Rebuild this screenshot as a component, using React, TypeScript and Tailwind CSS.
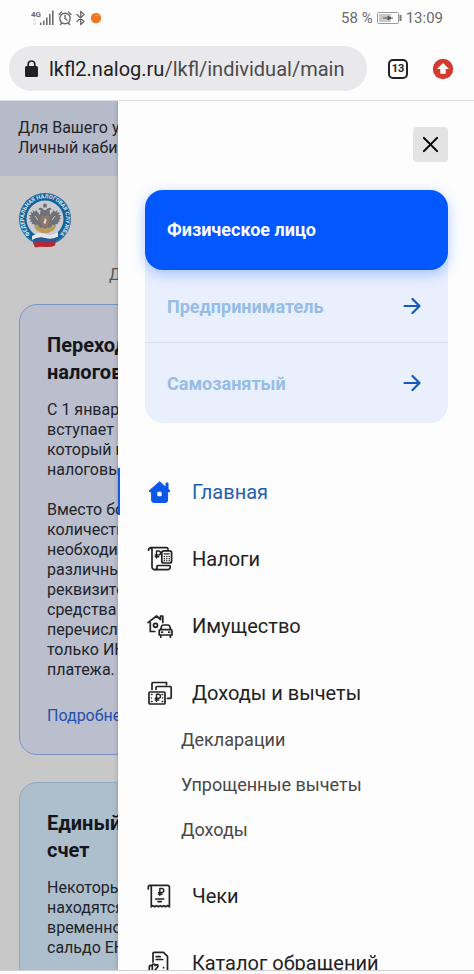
import type { ReactNode } from "react";

const strokeProps = {
  fill: "none",
  stroke: "currentColor",
  strokeLinecap: "round" as const,
  strokeLinejoin: "round" as const,
};

function Icon({ children }: { children: ReactNode }) {
  return (
    <svg viewBox="0 0 26 26" className="size-[26px] shrink-0" aria-hidden="true" {...strokeProps} strokeWidth={1.7}>
      {children}
    </svg>
  );
}

const Ruble = ({ x, y }: { x: number; y: number }) => (
  <g transform={`translate(${x} ${y})`}>
    <path d="M1.5 7V0h2a2 2 0 0 1 0 4H.2M.2 5.700h3.600" strokeWidth={1.4} />
  </g>
);

function HomeIcon() {
  return (
    <Icon>
      <path
        d="M12.400 3 2 12l1 1 1.600-1v9a2.500 2.500 0 0 0 2.500 2.500h11a2.500 2.500 0 0 0 2.500-2.500v-9l1.400 1 1-1-2-2V4h-2v4z"
        fill="currentColor"
        strokeWidth={1}
      />
      <rect x="10.300" y="12.800" width="4.400" height="4.400" rx="1.200" fill="#fff" stroke="none" />
    </Icon>
  );
}

function TaxIcon() {
  return (
    <Icon>
      <path d="M1.500 4.200V3.500A1.800 1.800 0 0 1 5 3.500V21a2.800 2.800 0 0 0 3 2.700M3.200 1.700h16.300a1.500 1.500 0 0 1 1.500 1.500" />
      <path d="M8 23.700a2 2 0 0 0 2-2c0-1.500-.5-2.200 1-2.200h11.500c1.200 0 1.200 4.200-2 4.200z" />
      <Ruble x={8} y={5} />
      <rect x="14.800" y="4.800" width="9.800" height="12.200" rx="2" />
      <path d="M17.200 7.800h5" strokeWidth={1.3} />
      <path d="M17.300 10.500h.1m2.300 0h.1m2.300 0h.1m-4.900 2.200h.1m2.300 0h.1m2.300 0h.1m-4.900 2.100h.1m2.300 0h.1m2.300 0h.1" strokeWidth={1.4} />
    </Icon>
  );
}

function PropertyIcon() {
  return (
    <Icon>
      <path d="M1 9.600 9.500 3l4 3.500V3h2.300v6.500M3.300 9.500v9h4.500" />
      <circle cx="8.500" cy="12.300" r="2" />
      <path d="m13.500 16.700 1.200-3.700q.4-1 1.500-1h5q1 0 1.400 1l1.200 3.700M13.500 16.700h10.300q1.200 0 1.200 1.300v4H12.200v-4q0-1.300 1.300-1.300zM13.800 22v2.200m9.600-2.200v2.200M14.700 19.200h.8m6.200 0h.8" />
    </Icon>
  );
}

function IncomeIcon() {
  return (
    <Icon>
      <path d="M5 9.500V3.500a1 1 0 0 1 1-1h13.500v2.300" />
      <path d="M9 9.300V7.500a1 1 0 0 1 1-1h13.200a1 1 0 0 1 1 1v9.800a1 1 0 0 1-1 1h-2.700" />
      <rect x="2" y="12" width="16" height="12" rx="1" />
      <path d="M4.500 14.500h.6m10 0h.6m-11.200 7h.6m10 0h.6M4.500 18h.1m11 0h.1" strokeWidth={1.4} />
      <Ruble x={8} y={14.3} />
    </Icon>
  );
}

function ReceiptIcon() {
  return (
    <Icon>
      <path d="M1.300 6V3.800a1.500 1.500 0 0 1 3 0v20l1.700-1.200 1.800 1.200 1.800-1.200 1.800 1.200 1.800-1.200 1.800 1.200 1.800-1.200 1.800 1.200 1.800-1.200 2 1.200V4a1.700 1.700 0 0 0-1.700-1.700H2.800" />
      <Ruble x={11.3} y={5.5} />
      <path d="M8.700 16h8M11 18.600h3.300" />
    </Icon>
  );
}

function CatalogIcon() {
  return (
    <Icon>
      <path d="M6 12V3.600Q6 2.300 7.300 2.300h9.200l4 4v15.500q0 1.500-1.500 1.500h-8M9.200 6.700h4M9.200 9.500h6.500M16.500 17.700h.1" />
      <path d="M2.300 25v-8.200q0-1.500 1.500-1.500t1.500 1.500v-1.500q.2-1.500 1.600-1.300 1.300.2 1.200 1.600 2.500-1.800 3 0 .3.900-1.600 2.600L6.300 22.500M5.300 17v2.500" />
    </Icon>
  );
}

function Emblem() {
  return (
    <svg viewBox="0 0 54 56" className="h-14 w-[54px]" role="img" aria-label="Федеральная налоговая служба">
      <circle cx="27" cy="27" r="26" fill="#12619b" />
      <circle cx="27" cy="27" r="18.500" fill="#c9cbce" />
      <circle cx="27" cy="27" r="25" fill="none" stroke="#4c8bb9" strokeWidth=".7" />
      <path id="emblem-ring" d="M12 42A21 21 0 1 1 42 42" fill="none" />
      <text fontSize="5.500" fontWeight="700" fill="#dde6ec" fontFamily="Roboto, sans-serif">
        <textPath href="#emblem-ring" startOffset="50%" textAnchor="middle">
          ФЕДЕРАЛЬНАЯ НАЛОГОВАЯ СЛУЖБА
        </textPath>
      </text>
      <g fill="#6f7078">
        <path d="M26 18c-2-3-5-3-6-.5l2.500.5-.5 5-4-5-1 2-2.500-2 .5 3-3-1 1.500 3-3 0 2.500 2.500-2.500 1 3 1.500-2 1.500 3 .8-1 2 3-.3 0 2 3-1.500 1 3.500 6.500 1 6.500-1 1-3.500 3 1.500 0-2 3 .3-1-2 3-.8-2-1.500 3-1.500-2.500-1 2.500-2.500-3 0 1.500-3-3 1 .5-3-2.500 2-1-2-4 5-.5-5 2.500-.5c-1-2.500-4-2.500-6 .5z" />
        <path d="m27 11-2 2 .5 2.500h3L29 13z" />
      </g>
      <path d="M22.500 24h9v7q-1 3-4.500 4-3.500-1-4.500-4z" fill="#8f7768" />
      <path d="m27 26 1.500 2-1 4-2-1z" fill="#ddd" />
      <path d="m16 34 4-1 2 3 3-1 2 3 2-3 3 1 2-3 4 1-2 4-6 3h-6l-6-3z" fill="#b99a5c" />
      <path d="m19 17 2 0m12 0 2 0M17 24l3 4m17-4-3 4" stroke="#d0ccc2" />
      <path d="M14 44q7-5 13-2t13-2v5q-7 3-13 1t-13 2z" fill="#e6e7ea" />
      <path d="M15 47.500q6-3 12-1t12-1.500v3.500q-6 3-12 1.500t-12 1z" fill="#285994" />
      <path d="M15 51q6-2 12-1t11-1.500l-1 5q-4 2-10 1.500t-10 .5z" fill="#b72731" />
    </svg>
  );
}

function StatusBar() {
  return (
    <div className="flex h-9 items-center justify-between pr-[31px] pl-[31px] text-[15px] text-[#6b6b6b]">
      <div className="flex items-center gap-1">
        <svg viewBox="0 0 23 16" className="h-4 w-[23px]" fill="currentColor" aria-hidden="true">
          <text x="0" y="6.500" fontSize="8" fontWeight="700" fontFamily="Roboto, sans-serif">4G</text>
          <path d="M9 12.500h1.400V15H9zm3-2h1.500V15H12zm3-3h1.600V15H15zm3-3.500h1.600v11H18zm3-3.500h1.600V15H21z" />
          <path d="m2 11 1.500-1.500L5 11M2 13l1.500 1.500L5 13" fill="none" stroke="#bbb" strokeWidth=".7" />
        </svg>
        <svg viewBox="0 0 14 16" className="h-4 w-3.5" aria-hidden="true" {...strokeProps} strokeWidth={1.4}>
          <circle cx="7" cy="8.500" r="5.200" />
          <path d="M7 5.500v3l2 1.500M1 4.500 3.500 2M13 4.500 10.500 2M3.500 13l-1 1.500M10.500 13l1 1.500" />
        </svg>
        <svg viewBox="0 0 10 16" className="h-4 w-2.5" aria-hidden="true" {...strokeProps} strokeWidth={1.3}>
          <path d="m1 4.500 7 7-3.300 3V1.500L8 4.500l-7 7" />
        </svg>
        <svg viewBox="0 0 12 12" className="size-3" aria-hidden="true">
          <circle cx="6" cy="6" r="5.200" fill="#ef7622" />
          <path d="M4 1.500 7 4l3-2" stroke="#f7a54c" fill="none" />
        </svg>
      </div>
      <div className="flex items-center gap-1">
        <span>58 %</span>
        <svg viewBox="0 0 25 12" className="h-3 w-[25px]" aria-hidden="true">
          <rect x=".5" y=".5" width="21" height="11" rx="1" fill="#fff" stroke="#999" />
          <path d="M2 2h12v8H2z" fill="#c9c9c9" />
          <path d="M6 6h10M11 4l3 2-3 2z" stroke="#555" fill="#555" />
          <path d="M23.500 3v6" stroke="#777" strokeWidth="2" />
        </svg>
        <span>13:09</span>
      </div>
    </div>
  );
}

function AddressBar() {
  return (
    <div className="flex items-center border-b border-[#dfdfe1] pt-2.5 pr-5 pb-[9px] pl-[9px]">
      <button type="button" className="flex h-[45px] min-w-0 flex-1 items-center gap-[11px] rounded-full bg-[#e9e9ec] pl-4 text-left text-[20px] text-[#222]">
        <svg viewBox="0 0 13 17" className="h-[17px] w-[13px] shrink-0" aria-hidden="true">
          <rect y="6" width="13" height="11" rx="1.500" fill="#222" />
          <path d="M3.200 7V4.300a3.300 3.300 0 0 1 6.600 0V7" fill="none" stroke="#222" strokeWidth="1.700" />
        </svg>
        <span className="whitespace-nowrap">
          lkfl2.nalog.ru<span className="text-[#4b4b4d]">/lkfl/individual/main</span>
        </span>
      </button>
      <button type="button" aria-label="Вкладки" className="ml-[21px] flex size-5 items-center justify-center rounded-[5px] border-2 border-[#222] text-[11px] leading-4 font-bold text-[#222]">
        <span>13</span>
      </button>
      <button type="button" aria-label="Обновить браузер" className="ml-6">
        <svg viewBox="0 0 22 22" className="size-[22px]" aria-hidden="true">
          <circle cx="11" cy="11" r="10.200" fill="#d33a30" />
          <path d="m11 5 6 6h-3.300v4.700H8.300V11H5z" fill="#fff" />
        </svg>
      </button>
    </div>
  );
}

type Card = { title: string[]; paragraphs: string[][]; link?: string; tone: string };

const cards: Card[] = [
  {
    title: ["Переход", "налогов"],
    paragraphs: [
      ["С 1 январ", "вступает в", "который в", "налоговы"],
      ["Вместо бо", "количеств", "необходим", "различны", "реквизито", "средства", "перечисля", "только ИН", "платежа."],
    ],
    link: "Подробнее",
    tone: "border-[#7795c5] bg-[#bbbecc]",
  },
  {
    title: ["Единый", "счет"],
    paragraphs: [["Некоторы", "находятся", "временно", "сальдо ЕН"]],
    tone: "border-[#8da8c0] bg-[#adbfcc] pb-10",
  },
];

const Lines = ({ lines }: { lines: string[] }) => (
  <>
    {lines.map((line) => (
      <span key={line} className="block">{line}</span>
    ))}
  </>
);

function Page() {
  return (
    <div className="h-full overflow-hidden bg-[#c8c8c9] text-[16px] leading-5 whitespace-nowrap text-[#22242b]">
      <p className="h-[75px] bg-[#b6bbca] pt-[17px] pl-[18px]">
        <Lines lines={["Для Вашего у,", "Личный кабин"]} />
      </p>
      <div className="pt-4 pl-[18px]">
        <Emblem />
      </div>
      <p className="mt-[17px] pl-[109px] text-[#555]">Д</p>
      <div className="mt-[19px] flex flex-col gap-[27px] px-[19px]">
        {cards.map((card) => (
          <article key={card.title[0]} className={`rounded-[18px] border px-[27px] pt-[27px] pb-7 ${card.tone}`}>
            <h2 className="text-[20px] leading-[27px] font-bold text-[#14161b]">
              <Lines lines={card.title} />
            </h2>
            <div className="mt-3.5 flex flex-col gap-5">
              {card.paragraphs.map((lines) => (
                <p key={lines[0]}>
                  <Lines lines={lines} />
                </p>
              ))}
            </div>
            {card.link && (
              <a href="#more" className="mt-[26px] block text-[#2350ae]">{card.link}</a>
            )}
          </article>
        ))}
      </div>
    </div>
  );
}

function Arrow() {
  return (
    <svg viewBox="0 0 18 18" className="size-[18px]" aria-hidden="true" {...strokeProps} strokeWidth={2.2}>
      <path d="M1.500 9h14.500M9.500 2 16.500 9l-7 7" />
    </svg>
  );
}

const menu = [
  { label: "Главная", icon: <HomeIcon />, active: true },
  { label: "Налоги", icon: <TaxIcon /> },
  { label: "Имущество", icon: <PropertyIcon /> },
  { label: "Доходы и вычеты", icon: <IncomeIcon />, children: ["Декларации", "Упрощенные вычеты", "Доходы"] },
  { label: "Чеки", icon: <ReceiptIcon /> },
  { label: "Каталог обращений", icon: <CatalogIcon /> },
];

function Drawer() {
  return (
    <aside className="absolute inset-y-0 right-0 left-[118px] overflow-hidden bg-[#fdfdfe] shadow-[0_0_4px_rgba(0,0,0,0.25)]">
      <div className="flex justify-end pt-[26px] pr-[26px]">
        <button type="button" aria-label="Закрыть" className="flex size-[35px] items-center justify-center rounded-[4px] bg-[#e3e3e4] text-black">
          <svg viewBox="0 0 18 18" className="size-[17px]" aria-hidden="true" {...strokeProps} strokeWidth={2.2}>
            <path d="m2 2 14 14M16 2 2 16" />
          </svg>
        </button>
      </div>
      <div className="mt-7 mr-[26px] ml-[27px] rounded-[18px] bg-[#e9effd] text-[18px] font-bold text-[#95bde5]">
        <button type="button" className="block h-20 w-full rounded-[18px] bg-[#0357fe] px-[22px] pb-0.5 text-left text-white shadow-[0_4px_14px_rgba(3,87,254,0.3)]">
          Физическое лицо
        </button>
        <button type="button" className="flex h-[73px] w-full items-center justify-between border-b border-[#d5deed] pr-[27px] pl-[22px]">
          Предприниматель
          <span className="text-[#155cb9]"><Arrow /></span>
        </button>
        <button type="button" className="flex h-20 w-full items-center justify-between pr-[27px] pl-[22px]">
          Самозанятый
          <span className="text-[#155cb9]"><Arrow /></span>
        </button>
      </div>
      <nav className="mt-[45px]">
        <ul className="flex flex-col gap-5">
          {menu.map((item) => (
            <li key={item.label}>
              <a
                href="#menu"
                className={`flex h-[47px] items-center gap-[19px] border-l-2 pl-[27px] text-[20px] whitespace-nowrap ${
                  item.active ? "border-[#1559e2] text-[#0b57e8]" : "border-transparent text-[#222]"
                }`}
              >
                {item.icon}
                <span className={item.active ? "text-[#2560ac]" : ""}>{item.label}</span>
              </a>
              {item.children && (
                <ul className="pt-px">
                  {item.children.map((child) => (
                    <li key={child}>
                      <a href="#submenu" className="flex h-[45px] items-center pl-[63px] text-[18px] text-[#484848]">{child}</a>
                    </li>
                  ))}
                </ul>
              )}
            </li>
          ))}
        </ul>
      </nav>
    </aside>
  );
}

export default function App() {
  return (
    <div className="flex h-screen flex-col overflow-hidden bg-[#fdfdfd] pb-[3px] font-[Roboto,sans-serif]">
      <header>
        <StatusBar />
        <AddressBar />
      </header>
      <main className="relative min-h-0 flex-1 overflow-hidden border-b border-[#cfcfd1]">
        <Page />
        <Drawer />
      </main>
    </div>
  );
}
